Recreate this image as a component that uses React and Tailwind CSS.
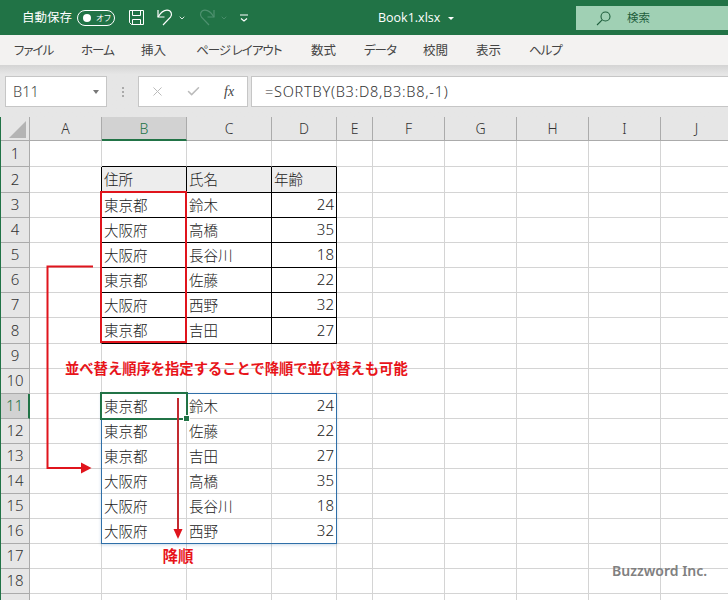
import React from "react";
import { ChevronDown, Check, X } from "lucide-react";

const jp = "font-['Noto_Sans_CJK_JP','Noto_Sans',sans-serif]";

const columns = ["A", "B", "C", "D", "E", "F", "G", "H", "I", "J"];
const rowHeights = [26, 26, 25, 25, 25, 25, 25, 26, 25, 25, 25, 25, 25, 25, 25, 25, 25, 25, 25];

const tabs = [
  { label: "ファイル", w: "w-[67px] tracking-[-1px] [font-feature-settings:'palt']" },
  { label: "ホーム", w: "w-[60px] tracking-[-1px] [font-feature-settings:'palt']" },
  { label: "挿入", w: "w-[55px]" },
  { label: "ページ レイアウト", w: "w-[115px] tracking-[-1px] [font-feature-settings:'palt']" },
  { label: "数式", w: "w-[53px]" },
  { label: "データ", w: "w-[59px] tracking-[-1px] [font-feature-settings:'palt']" },
  { label: "校閲", w: "w-[53px]" },
  { label: "表示", w: "w-[53px]" },
  { label: "ヘルプ", w: "w-[40px] tracking-[-1px] [font-feature-settings:'palt']" },
];

const cells = {
  2: ["住所", "氏名", "年齢"],
  3: ["東京都", "鈴木", "24"],
  4: ["大阪府", "高橋", "35"],
  5: ["大阪府", "長谷川", "18"],
  6: ["東京都", "佐藤", "22"],
  7: ["大阪府", "西野", "32"],
  8: ["東京都", "吉田", "27"],
  11: ["東京都", "鈴木", "24"],
  12: ["東京都", "佐藤", "22"],
  13: ["東京都", "吉田", "27"],
  14: ["大阪府", "高橋", "35"],
  15: ["大阪府", "長谷川", "18"],
  16: ["大阪府", "西野", "32"],
};

function cellClass(row, col) {
  const inTable = row >= 2 && row <= 8 && col >= 1 && col <= 3;
  const rightBlack = (row >= 2 && row <= 8 && col >= 0 && col <= 3);
  const bottomBlack = row >= 1 && row <= 8 && col >= 1 && col <= 3;
  return [
    "flex items-center overflow-visible whitespace-nowrap border-r border-b text-[14.5px] font-light text-[#222] pl-[2px] pr-[2px] pb-px",
    rightBlack ? "border-r-black" : "border-r-[#d4d4d4]",
    bottomBlack ? "border-b-black" : "border-b-[#d4d4d4]",
    row === 2 && inTable ? "bg-[#ededed]" : "",
    col === 3 && row !== 2 ? "justify-end font-['Noto_Sans',sans-serif] text-[15px]" : "",
  ].join(" ");
}

function TitleBar() {
  return (
    <div className="flex h-[35px] items-center bg-[#217346] text-white relative">
      <span className={`ml-[22px] w-[55px] text-[12.5px] ${jp}`}>自動保存</span>
      <div className="flex h-[16px] w-[38px] items-center rounded-full border border-white pl-[5px]">
        <span className="h-[8px] w-[8px] rounded-full bg-white" />
        <span className={`ml-[5px] whitespace-nowrap text-[8px] tracking-[-0.5px] ${jp}`}>オフ</span>
      </div>
      <svg className="ml-[13px]" width="17" height="17" viewBox="0 0 17 17" fill="none" stroke="white" strokeWidth="1">
        <path d="M1.5 1.5h14v14h-12l-2-2z" />
        <path d="M4.5 1.5v5h8v-5M4.5 15.5v-5h8v5" />
      </svg>
      <svg className="ml-[12px]" width="16" height="17" viewBox="0 0 16 17" fill="none" stroke="white" strokeWidth="1.2">
        <path d="M1 1v7h6.5" />
        <path d="M1 8C4 3 7.5 1.2 10 1.2c4.5 0 5.5 4.6 3.5 7L6 16" />
      </svg>
      <ChevronDown className="ml-[5px]" size={8} strokeWidth={2.5} />
      <svg className="ml-[13px]" width="16" height="17" viewBox="0 0 16 17" fill="none" stroke="#4f9170" strokeWidth="1.2">
        <path d="M15 1v7H8.5" />
        <path d="M15 8C12 3 8.5 1.2 6 1.2c-4.5 0-5.5 4.6-3.5 7L10 16" />
      </svg>
      <ChevronDown className="ml-[5px] text-[#4f9170]" size={8} strokeWidth={2.5} />
      <svg className="ml-[12px]" width="8" height="8" viewBox="0 0 8 8" fill="none" stroke="white" strokeWidth="1.2">
        <path d="M0 1h8M1 4.5l3 2.5 3-2.5" />
      </svg>
      <span className="absolute left-[378px] top-[9px] font-['Open_Sans',sans-serif] text-[12.5px] leading-[17px]">Book1.xlsx</span>
      <span className="absolute left-[448px] top-[17px] h-0 w-0 border-x-[3px] border-t-[3px] border-x-transparent border-t-white" />
      <div className="absolute left-[576px] top-[6px] flex h-[24px] w-[152px] items-center bg-[#a0d0b4] text-[#1f5f3d]">
        <svg className="ml-[20px]" width="15" height="15" viewBox="0 0 15 15" fill="none" stroke="#1f5f3d" strokeWidth="1.1">
          <circle cx="9.5" cy="5.5" r="4.5" />
          <path d="M6.2 8.8 1 14" />
        </svg>
        <span className={`ml-[16px] text-[11.5px] ${jp}`}>検索</span>
      </div>
    </div>
  );
}

function TabsBar() {
  return (
    <div className={`flex h-[30px] items-center bg-[#f3f2f1] pl-[14px] text-[12.5px] text-[#444] ${jp}`}>
      {tabs.map((t) => (
        <span key={t.label} className={`${t.w} shrink-0 whitespace-nowrap`}>
          {t.label}
        </span>
      ))}
    </div>
  );
}

function FormulaBar() {
  return (
    <div className="flex h-[52px] items-start bg-gradient-to-b from-[#d4d4d4] from-0% to-[#e6e6e6] to-[18%] pl-[5px] pt-[11px]">
      <div className="flex h-[31px] w-[102px] items-center justify-between border border-[#c6c6c6] bg-white pl-[7px] pr-[7px] font-['Noto_Sans',sans-serif] text-[14.5px] font-light text-[#444]">
        <span>B11</span>
        <span className="h-0 w-0 border-x-[3.5px] border-t-[4px] border-x-transparent border-t-[#777]" />
      </div>
      <div className="ml-[14px] flex h-[31px] w-[4px] flex-col items-center justify-center gap-[2px]">
        <span className="h-[2px] w-[2px] bg-[#aaa]" />
        <span className="h-[2px] w-[2px] bg-[#aaa]" />
        <span className="h-[2px] w-[2px] bg-[#aaa]" />
      </div>
      <div className="ml-[13px] flex h-[31px] w-[110px] items-center border border-[#c6c6c6] bg-white">
        <X className="ml-[11px] text-[#bbb]" size={15} strokeWidth={1.6} />
        <Check className="ml-[21px] text-[#bbb]" size={15} strokeWidth={2.4} />
        <span className="ml-[23px] font-['Liberation_Serif',serif] text-[14px] italic text-[#444]">fx</span>
      </div>
      <div className="ml-[3px] flex h-[31px] flex-1 items-center border-y border-l border-[#c6c6c6] bg-white pl-[13px] font-['Noto_Sans',sans-serif] text-[14.5px] font-light tracking-[0.75px] text-[#333]">
        =SORTBY(B3:D8,B3:B8,-1)
      </div>
    </div>
  );
}

function Sheet() {
  return (
    <div className="relative flex-1 overflow-hidden border-l border-l-[#217346] bg-white">
      <div className="grid grid-cols-[29px_72px_85px_85px_65px_36px_72px_72px_72px_72px_72px] font-['Noto_Sans_CJK_JP',sans-serif]">
        {/* column headers */}
        <div className="relative h-[24px] border-r border-b border-[#ababab] bg-[#e6e6e6]">
          <span className="absolute bottom-[2px] right-[3px] h-0 w-0 border-b-[17px] border-l-[17px] border-b-[#b4b4b4] border-l-transparent" />
        </div>
        {columns.map((c) => (
          <div
            key={c}
            className={
              c === "B"
                ? "flex h-[24px] items-center justify-center border-r border-b-2 border-r-[#ababab] border-b-[#217346] bg-[#d2d2d2] font-['Noto_Sans',sans-serif] text-[14px] font-light text-[#217346]"
                : "flex h-[24px] items-center justify-center border-r border-b border-[#ababab] bg-[#e6e6e6] font-['Noto_Sans',sans-serif] text-[14px] font-light text-[#333]"
            }
          >
            {c}
          </div>
        ))}

        {/* rows */}
        {rowHeights.map((h, i) => {
          const row = i + 1;
          const data = cells[row];
          return (
            <React.Fragment key={row}>
              <div
                style={{ height: h }}
                className={
                  row === 11
                    ? "flex items-center justify-center border-r-2 border-b border-r-[#217346] border-b-[#ababab] bg-[#d2d2d2] pb-px font-['Noto_Sans',sans-serif] text-[15px] font-light text-[#217346]"
                    : "flex items-center justify-center border-r border-b border-[#ababab] bg-[#e6e6e6] pb-px font-['Noto_Sans',sans-serif] text-[15px] font-light text-[#333]"
                }
              >
                {row < 19 ? row : ""}
              </div>
              {columns.map((c, col) => {
                let text = "";
                if (data && col >= 1 && col <= 3) text = data[col - 1];
                return (
                  <div key={c} style={{ height: h }} className={cellClass(row, col)}>
                    {text}
                  </div>
                );
              })}
            </React.Fragment>
          );
        })}
      </div>

      {/* selection and annotation overlays, offsets from the sheet origin (x+1, y+117) */}
      <div className="absolute left-[100px] top-[276px] h-[151px] w-[236px] border border-[#2f6fa8] shadow-[0_1px_3px_rgba(47,111,168,0.25)]" />
      <div className="absolute left-[99px] top-[74px] h-[152px] w-[87px] border-2 border-[#e0141c]" />
      <div className="absolute left-[99px] top-[275px] h-[28px] w-[88px] border-2 border-[#217346]" />
      <div className="absolute left-[182px] top-[298px] h-[7px] w-[7px] border border-white bg-[#217346]" />

      <span className={`absolute left-[64px] top-[241px] whitespace-nowrap text-[14.3px] font-bold leading-[20px] text-[#e8141a] ${jp}`}>
        並べ替え順序を指定することで降順で並び替えも可能
      </span>
      <span className={`absolute left-[161.5px] top-[428px] whitespace-nowrap text-[15.5px] font-bold leading-[20px] text-[#e8141a] ${jp}`}>
        降順
      </span>
      <span className="absolute left-[611px] top-[444px] whitespace-nowrap font-['Noto_Sans',sans-serif] text-[14px] font-semibold leading-[20px] text-[#808080]">
        Buzzword Inc.
      </span>

      <svg className="pointer-events-none absolute left-0 top-0" width="727" height="483" viewBox="0 0 727 483" fill="none">
        <path d="M92 149.5H46.5V351H81" stroke="#e0141c" strokeWidth="2" />
        <path d="M80 345.5 90.5 351 80 356.5z" fill="#e0141c" />
        <path d="M177 281V414" stroke="#c22a30" strokeWidth="2" />
        <path d="M172.5 412h9L177 422z" fill="#e0141c" />
      </svg>
    </div>
  );
}

export default function App() {
  return (
    <div className="flex h-[600px] w-[728px] flex-col overflow-hidden bg-white">
      <TitleBar />
      <TabsBar />
      <FormulaBar />
      <Sheet />
    </div>
  );
}
